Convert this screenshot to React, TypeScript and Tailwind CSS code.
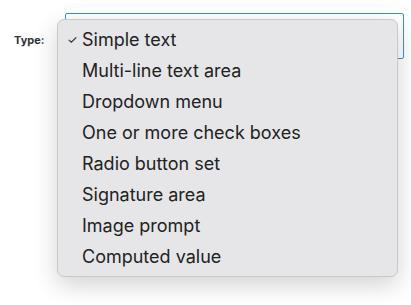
import React from 'react';

const options = [
  'Simple text',
  'Multi-line text area',
  'Dropdown menu',
  'One or more check boxes',
  'Radio button set',
  'Signature area',
  'Image prompt',
  'Computed value',
];

export default function App() {
  const selected = 0;
  return (
    <div className="relative h-[305px] w-[411px] overflow-hidden bg-white font-['Inter',sans-serif]">
      <div className="flex items-start pl-[14px] pt-[13px]">
        <label className="mt-[20px] w-[51px] text-[11px] font-bold leading-[14px] text-[#333]">Type:</label>
        <div className="h-[46px] w-[339px] rounded-[2px] border border-[#3b8fd9]" />
      </div>

      <div className="absolute left-[57px] top-[19px] w-[341px] rounded-[7px] border border-[#c9c9cb] bg-[#e6e6e8] py-[4px] shadow-[0_8px_24px_rgba(0,0,0,0.18)]">
        {options.map((opt, i) => (
          <div key={opt} className="flex h-[31px] items-center text-[18px] text-[#222]">
            <span className="w-[24px] pl-[9px] text-[12px]">{i === selected ? '✓' : ''}</span>
            <span>{opt}</span>
          </div>
        ))}
      </div>
    </div>
  );
}
